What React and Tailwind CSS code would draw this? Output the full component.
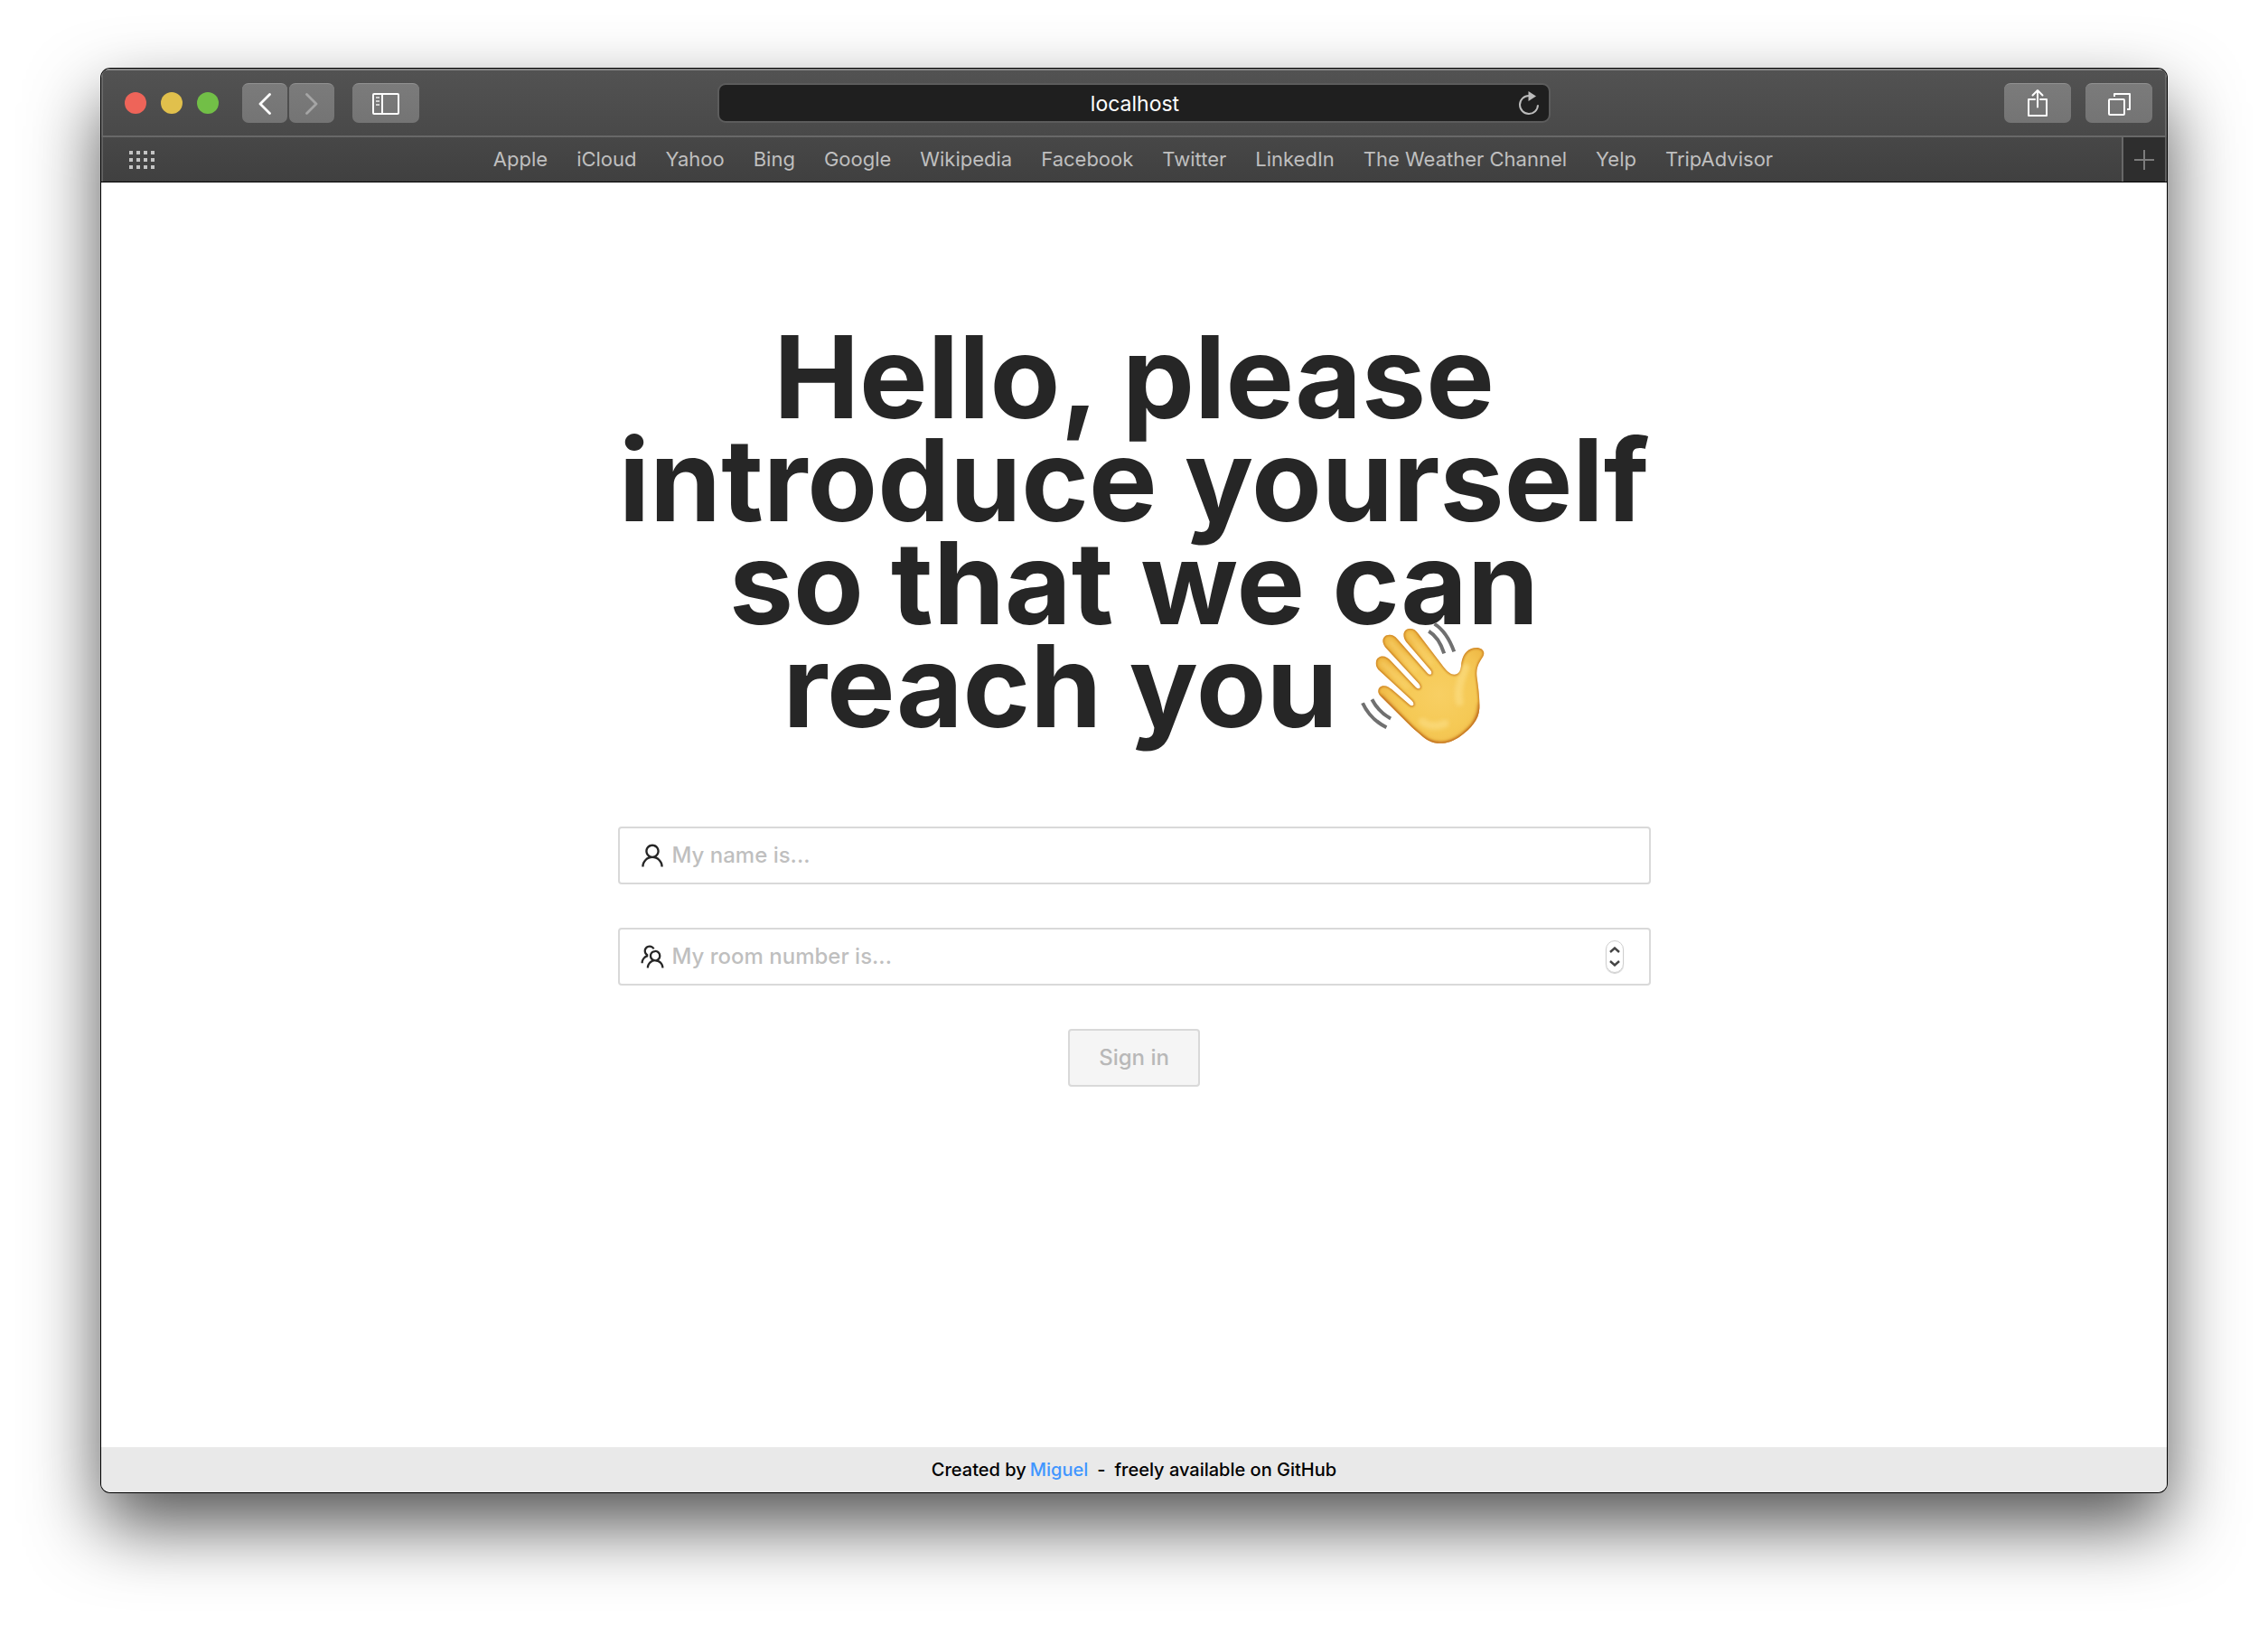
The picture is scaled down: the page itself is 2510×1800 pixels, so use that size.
import { AiOutlineTeam, AiOutlineUser } from "react-icons/ai";

const bookmarks = [
  "Apple",
  "iCloud",
  "Yahoo",
  "Bing",
  "Google",
  "Wikipedia",
  "Facebook",
  "Twitter",
  "LinkedIn",
  "The Weather Channel",
  "Yelp",
  "TripAdvisor",
];

function ToolButton({ label, className, children }) {
  return (
    <button
      type="button"
      aria-label={label}
      className={`flex h-11 items-center justify-center rounded-[7px] border-t border-[#929292] bg-linear-to-b from-[#7b7b7b] to-[#747474] ${className}`}
    >
      {children}
    </button>
  );
}

function TitleBar() {
  return (
    <div className="grid h-[76px] grid-cols-[1fr_2fr_1fr] items-center border-2 border-[#686868] border-t-[#848484] bg-linear-to-b from-[#525252] to-[#494949]">
      <div className="flex items-center pl-6">
        <div className="flex gap-4">
          <button type="button" aria-label="Close" className="size-6 rounded-full bg-[#ee6459]" />
          <button type="button" aria-label="Minimize" className="size-6 rounded-full bg-[#e1c04c]" />
          <button type="button" aria-label="Zoom" className="size-6 rounded-full bg-[#72bf47]" />
        </div>
        <div className="ml-[26px] flex gap-0.5">
          <ToolButton label="Back" className="w-[50px]">
            <svg viewBox="0 0 14 24" className="h-6 w-3.5" fill="none" stroke="#fff" strokeWidth="2.8" strokeLinecap="round" strokeLinejoin="round">
              <path d="M12.500 1.500 2 12l10.500 10.500" />
            </svg>
          </ToolButton>
          <ToolButton label="Forward" className="w-[50px]">
            <svg viewBox="0 0 14 24" className="h-6 w-3.5" fill="none" stroke="#a5a5a5" strokeWidth="2.8" strokeLinecap="round" strokeLinejoin="round">
              <path d="M1.500 1.500 12 12 1.500 22.500" />
            </svg>
          </ToolButton>
        </div>
        <ToolButton label="Show sidebar" className="ml-5 w-[74px]">
          <svg viewBox="0 0 30 24" className="h-6 w-[30px]" fill="none" stroke="#fff" strokeWidth="2">
            <rect x="1" y="1" width="28" height="22" rx="1" />
            <path d="M11 1v22" />
            <path stroke="#d0d0d0" d="M4 5h4M4 9h4M4 13h4" />
          </svg>
        </ToolButton>
      </div>

      <div className="mx-auto flex w-[922px] max-w-full items-center rounded-[9px] border-2 border-[#5c5c5c] bg-[#1f1f1f]">
        <input
          type="text"
          aria-label="Address"
          defaultValue="localhost"
          className="h-10 min-w-0 flex-1 bg-transparent pt-0.5 pl-[50px] text-center text-[23px] text-white outline-none"
        />
        <button type="button" aria-label="Reload" className="flex w-12 justify-center pl-1">
          <svg viewBox="0 0 24 28" className="h-7 w-6" fill="none" stroke="#bcbcbc" strokeWidth="2">
            <path d="M22 16.200A10 10 0 1 1 12 6" />
            <path d="M11.500 1v11l8.500-5.500z" fill="#bcbcbc" stroke="none" />
          </svg>
        </button>
      </div>

      <div className="flex justify-end gap-4 pr-3.5">
        <ToolButton label="Share" className="w-[74px]">
          <svg viewBox="0 0 24 32" className="mb-0.5 h-8 w-6" fill="none" stroke="#fff" strokeWidth="2" strokeLinejoin="round" strokeLinecap="round">
            <path d="M9 12H2v18h20V12h-7" />
            <path d="M12 20.500V2M6.500 7.500 12 2l5.500 5.500" />
          </svg>
        </ToolButton>
        <ToolButton label="Show tab overview" className="w-[74px]">
          <svg viewBox="0 0 26 26" className="size-[26px]" fill="none" stroke="#fff" strokeWidth="2" strokeLinejoin="round">
            <rect x="2" y="8" width="17" height="17" rx="1" />
            <path d="M8 5V2h17v17h-3" />
          </svg>
        </ToolButton>
      </div>
    </div>
  );
}

function BookmarksBar() {
  return (
    <div className="border-b border-black">
      <div className="flex h-[49px] border-x-2 border-[#606060] bg-linear-to-b from-[#474747] to-[#404040]">
        <button type="button" aria-label="Favorites" className="flex w-[74px] items-center pl-[29px]">
          <svg viewBox="0 0 28 20" className="h-5 w-7" fill="#c4c4c4">
            {[0, 8, 16].map((y) =>
              [0, 8, 16, 24].map((x) => <rect key={`${x}-${y}`} x={x} y={y} width="4" height="4" />)
            )}
          </svg>
        </button>
        <nav className="flex flex-1 items-center justify-center gap-8 pr-7 text-[22px] whitespace-nowrap text-[#bfbfbf]">
          {bookmarks.map((name) => (
            <a key={name} href="#">
              {name}
            </a>
          ))}
        </nav>
        <button
          type="button"
          aria-label="New tab"
          className="flex w-12 items-center justify-center border-l-2 border-[#686868] bg-[#2e2e2e]"
        >
          <svg viewBox="0 0 22 22" className="size-[22px]" stroke="#7c7c7c" strokeWidth="2">
            <path d="M11 0v22M0 11h22" />
          </svg>
        </button>
      </div>
    </div>
  );
}

const handOutline =
  "M144 293C132 276 142 261 158 261C168 261 176 266 186 275L244 325Q252 330 256 323Q257 317 250 310L139 207C124 190 131 164 152 163C164 163 172 169 181 179L263 266Q272 274 277 268Q280 263 273 254L162 133C146 112 156 92 176 92C187 92 195 97 203 107L300 217Q308 227 314 222Q318 217 311 208L231 115C216 94 223 72 244 71C256 71 264 77 272 89L349 190C362 208 376 224 391 224C404 224 411 213 413 197C415 168 425 147 447 138C469 130 487 138 489 152C490 160 484 167 477 178C465 198 463 215 466 235C470 265 475 298 474 335C472 374 446 402 412 427C376 453 338 459 305 442C288 433 270 415 250 398Z";

function WavingHand() {
  return (
    <svg viewBox="78 48 416 410" role="img" aria-label="Waving hand" className="-my-5 ml-6 inline-block h-[137px] w-[139px] align-baseline">
      <defs>
        <radialGradient id="skin" gradientUnits="userSpaceOnUse" cx="340" cy="290" r="200">
          <stop offset="0" stopColor="#f8cf63" />
          <stop offset="0.600" stopColor="#f5c955" />
          <stop offset="0.820" stopColor="#f3c250" />
          <stop offset="1" stopColor="#efb945" />
        </radialGradient>
        <filter id="soft" x="-30%" y="-30%" width="160%" height="160%">
          <feGaussianBlur stdDeviation="7" />
        </filter>
        <filter id="edge" x="-10%" y="-10%" width="120%" height="120%">
          <feGaussianBlur stdDeviation="3" />
        </filter>
        <clipPath id="handClip">
          <path d={handOutline} />
        </clipPath>
      </defs>
      <g clipPath="url(#handClip)">
        <rect x="78" y="48" width="416" height="410" fill="url(#skin)" />
        <path filter="url(#edge)" fill="none" stroke="#c87a20" strokeWidth="7" d={handOutline} />
        <path filter="url(#soft)" fill="none" stroke="#bd681b" strokeWidth="13" d="M478 320C476 376 448 406 414 431C376 457 338 463 303 446C284 435 268 419 248 402L144 296" />
        <path filter="url(#soft)" fill="none" stroke="#fbdc80" strokeWidth="26" strokeLinecap="round" d="M428 200C408 250 400 280 408 315M285 380C310 398 340 396 360 386" opacity="0.700" />
        <path filter="url(#soft)" fill="none" stroke="#fad574" strokeWidth="14" strokeLinecap="round" d="M244 92L315 185M178 115L262 210M154 187L235 265" opacity="0.600" />
      </g>
      <g fill="none" stroke="#707070" strokeWidth="12">
        <path d="M306 80Q340 100 357 154M325 56Q366 82 390 148" />
        <path d="M118 306Q140 348 180 370M87 318Q112 372 166 399" />
      </g>
    </svg>
  );
}

function SignInForm() {
  return (
    <form className="flex flex-col items-center gap-12" onSubmit={(event) => event.preventDefault()}>
      <label className="flex h-16 w-full items-center gap-1.5 rounded-sm border-2 border-[#d9d9d9] px-5">
        <AiOutlineUser className="size-8 shrink-0 text-[#262626]" aria-hidden="true" />
        <input
          type="text"
          aria-label="My name is"
          placeholder="My name is..."
          className="min-w-0 flex-1 text-[24px] font-medium outline-none placeholder:text-[#bfbfbf]"
        />
      </label>
      <div className="flex h-16 w-full items-center gap-1.5 rounded-sm border-2 border-[#d9d9d9] px-5">
        <AiOutlineTeam className="size-8 shrink-0 text-[#262626]" aria-hidden="true" />
        <input
          type="text"
          inputMode="numeric"
          aria-label="My room number is"
          placeholder="My room number is..."
          className="min-w-0 flex-1 text-[24px] font-medium outline-none placeholder:text-[#bfbfbf]"
        />
        <div className="mr-2 flex h-9 w-5 flex-col items-center justify-center gap-2 rounded-full border border-[#cfcfcf] shadow-[0_1px_1px_rgba(0,0,0,0.2)]">
          <button type="button" aria-label="Increase room number">
            <svg viewBox="0 0 12 7" className="h-[7px] w-3" fill="none" stroke="#444" strokeWidth="2.4">
              <path d="M1 6l5-4.500L11 6" />
            </svg>
          </button>
          <button type="button" aria-label="Decrease room number">
            <svg viewBox="0 0 12 7" className="h-[7px] w-3" fill="none" stroke="#444" strokeWidth="2.4">
              <path d="M1 1l5 4.500L11 1" />
            </svg>
          </button>
        </div>
      </div>
      <button
        type="submit"
        disabled
        className="h-16 rounded-sm border-2 border-[#d9d9d9] bg-[#f5f5f5] px-8 text-[24px] font-medium text-[#b8b8b8]"
      >
        Sign in
      </button>
    </form>
  );
}

export default function App() {
  return (
    <div className="flex min-h-screen flex-col bg-white px-28 pt-[76px] pb-[148px] font-['Inter',sans-serif]">
      <div className="flex flex-1 flex-col overflow-hidden rounded-[10px] bg-white shadow-[0_0_0_1px_#000,0_36px_80px_rgba(0,0,0,0.68)]">
        <TitleBar />
        <BookmarksBar />
        <main className="mx-auto w-1/2 flex-1 pt-[158px]">
          <h1 className="mb-[99px] text-center text-[127px] leading-[114px] font-bold whitespace-nowrap text-[#262626]">
            Hello, please
            <br />
            introduce yourself
            <br />
            so that we can
            <br />
            reach you
            <WavingHand />
          </h1>
          <SignInForm />
        </main>
        <footer className="flex h-[50px] items-center justify-center gap-1 bg-[#e9e9e9] text-[20px] font-medium text-black">
          <span>Created by</span>
          <a href="#" className="text-[#4096ff]">
            Miguel
          </a>
          <span className="px-1.5">-</span>
          <span>freely available on GitHub</span>
        </footer>
      </div>
    </div>
  );
}
